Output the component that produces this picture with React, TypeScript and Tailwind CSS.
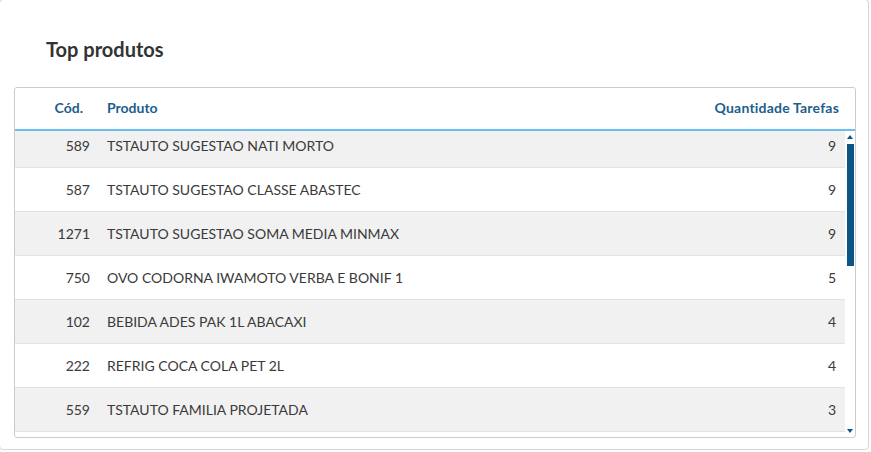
import React from "react";

const rows = [
  { cod: "589", produto: "TSTAUTO SUGESTAO NATI MORTO", qtd: "9" },
  { cod: "587", produto: "TSTAUTO SUGESTAO CLASSE ABASTEC", qtd: "9" },
  { cod: "1271", produto: "TSTAUTO SUGESTAO SOMA MEDIA MINMAX", qtd: "9" },
  { cod: "750", produto: "OVO CODORNA IWAMOTO VERBA E BONIF 1", qtd: "5" },
  { cod: "102", produto: "BEBIDA ADES PAK 1L ABACAXI", qtd: "4" },
  { cod: "222", produto: "REFRIG COCA COLA PET 2L", qtd: "4" },
  { cod: "559", produto: "TSTAUTO FAMILIA PROJETADA", qtd: "3" },
];

export default function App() {
  return (
    <div className="w-[871px] h-[452px] bg-white overflow-hidden" style={{ fontFamily: "Lato, 'Open Sans', sans-serif" }}>
      <div className="-ml-px -mt-px w-[870px] h-[451px] border border-[#d6d6d6] rounded-[4px] bg-white flex flex-col">
        <div className="pl-[46px] pt-[37px] h-[87px]">
          <h2 className="text-[20px] leading-[25px] font-bold text-[#333333]">Top produtos</h2>
        </div>
        <div className="ml-[14px] w-[842px] h-[351px] border border-[#cccccc] rounded-[3px] flex flex-col overflow-hidden">
          <div className="h-[43px] flex items-center pb-[3px] border-b-2 border-[#6bbff0] text-[14px] font-bold text-[#1c5e8e] shrink-0">
            <div className="w-[68px] text-right">Cód.</div>
            <div className="pl-[24px] flex-1">Produto</div>
            <div className="pr-[16px] tracking-[0.2px]">Quantidade Tarefas</div>
          </div>
          <div className="flex flex-1 overflow-hidden">
            <div className="flex-1 overflow-hidden">
              <div className="-mt-[7px]">
                {rows.map((r, i) => (
                  <div
                    key={r.cod}
                    className={`h-[44px] flex items-center pb-[1px] border-b border-[#e3e3e3] text-[14px] text-[#3a3a3a] ${i % 2 === 0 ? "bg-[#f1f1f1]" : "bg-white"}`}
                  >
                    <div className="w-[75px] text-right">{r.cod}</div>
                    <div className="pl-[17px] flex-1">{r.produto}</div>
                    <div className="pr-[9px]">{r.qtd}</div>
                  </div>
                ))}
              </div>
            </div>
            <div className="w-[10px] flex flex-col items-center pt-[4px] pb-[4px]">
              <svg width="6" height="4" viewBox="0 0 6 4" className="shrink-0">
                <path d="M0 4 L3 0 L6 4 Z" fill="#0b5586" />
              </svg>
              <div className="mt-[5px] w-[7px] h-[122px] bg-[#0b5586]" />
              <div className="flex-1" />
              <svg width="6" height="4" viewBox="0 0 6 4" className="shrink-0">
                <path d="M0 0 L3 4 L6 0 Z" fill="#0b5586" />
              </svg>
            </div>
          </div>
        </div>
      </div>
    </div>
  );
}
